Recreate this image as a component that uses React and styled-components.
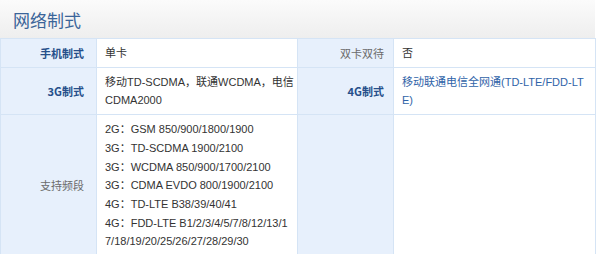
import React from "react";
import styled, { createGlobalStyle } from "styled-components";

const Global = createGlobalStyle`
  body {
    margin: 0;
    background: #fff;
    font-family: "Liberation Sans", "Noto Sans CJK SC", sans-serif;
  }
`;

const Panel = styled.section`
  width: 595px;
`;

const Header = styled.div`
  height: 38px;
  display: flex;
  align-items: center;
  padding-left: 13px;
  background: linear-gradient(#fbfbfb, #eeeeee);
`;

const Title = styled.h2`
  margin: 0;
  font-family: "Noto Sans CJK SC", sans-serif;
  font-size: 17px;
  font-weight: 400;
  color: #3b6599;
`;

const Table = styled.table`
  width: 595px;
  table-layout: fixed;
  border-collapse: collapse;
  font-size: 11px;
  line-height: 18.7px;
`;

const Label = styled.th`
  background: #e7f0fc;
  border: 1px solid #d5e4f5;
  text-align: right;
  vertical-align: middle;
  padding: 5px ${(p) => (p.$right ? "9px" : "12px")} 4px 8px;
  font-weight: ${(p) => (p.$strong ? 700 : 400)};
  color: ${(p) => (p.$strong ? "#264f8a" : "#6b6b6b")};
  font-family: "Noto Sans CJK SC", sans-serif;
`;

const Value = styled.td`
  background: #fff;
  border: 1px solid #d5e4f5;
  padding: 5px ${(p) => (p.$wide ? "4px" : "3px")} 4px 8px;
  vertical-align: top;
  color: ${(p) => (p.$link ? "#2f63a8" : "#333")};
  word-break: break-all;
`;

const Line = styled.div``;

const bands = [
  "2G：GSM 850/900/1800/1900",
  "3G：TD-SCDMA 1900/2100",
  "3G：WCDMA 850/900/1700/2100",
  "3G：CDMA EVDO 800/1900/2100",
  "4G：TD-LTE B38/39/40/41",
  "4G：FDD-LTE B1/2/3/4/5/7/8/12/13/17/18/19/20/25/26/27/28/29/30",
];

export default function App() {
  return (
    <Panel>
      <Global />
      <Header>
        <Title>网络制式</Title>
      </Header>
      <Table>
        <colgroup>
          <col style={{ width: 96 }} />
          <col style={{ width: 201 }} />
          <col style={{ width: 96 }} />
          <col style={{ width: 202 }} />
        </colgroup>
        <tbody>
          <tr>
            <Label $strong>手机制式</Label>
            <Value>单卡</Value>
            <Label $right>双卡双待</Label>
            <Value $wide>否</Value>
          </tr>
          <tr>
            <Label $strong>3G制式</Label>
            <Value>移动TD-SCDMA，联通WCDMA，电信CDMA2000</Value>
            <Label $strong $right>4G制式</Label>
            <Value $wide $link>移动联通电信全网通(TD-LTE/FDD-LTE)</Value>
          </tr>
          <tr>
            <Label>支持频段</Label>
            <Value>
              {bands.map((b) => (
                <Line key={b}>{b}</Line>
              ))}
            </Value>
            <Label $right />
            <Value $wide />
          </tr>
        </tbody>
      </Table>
    </Panel>
  );
}
